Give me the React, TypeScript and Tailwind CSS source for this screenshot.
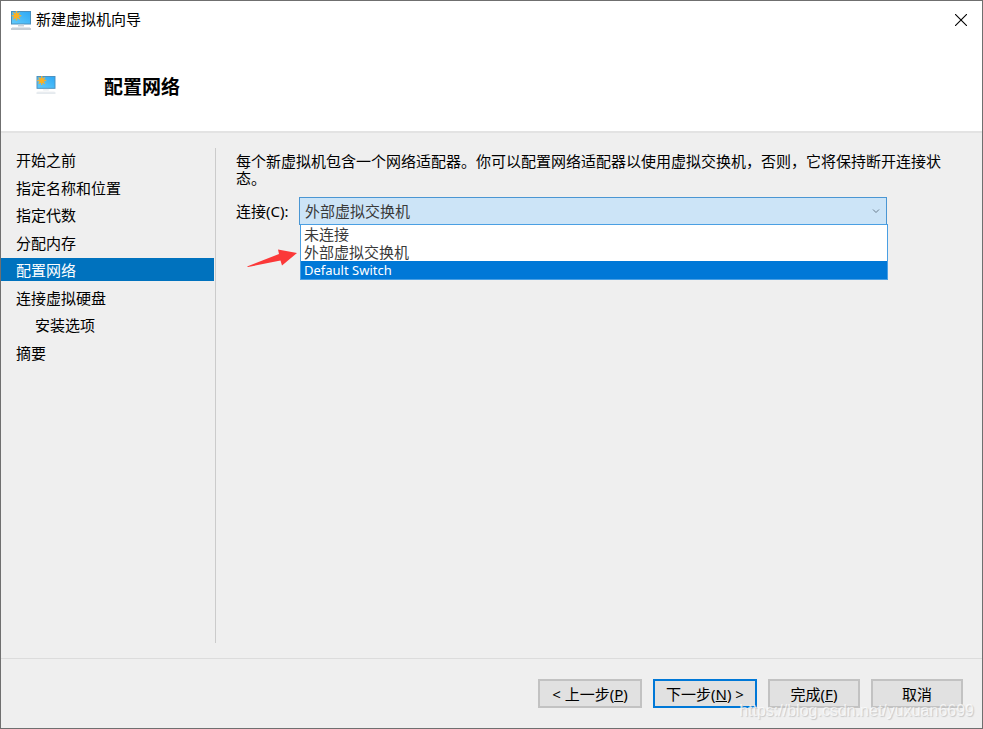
import { useState } from "react";

const steps = [
  { label: "开始之前" },
  { label: "指定名称和位置" },
  { label: "指定代数" },
  { label: "分配内存" },
  { label: "配置网络", active: true },
  { label: "连接虚拟硬盘" },
  { label: "安装选项", nested: true },
  { label: "摘要" },
];

const switches = ["未连接", "外部虚拟交换机", "Default Switch"];

function MonitorIcon({ className, faintStand }: { className?: string; faintStand?: boolean }) {
  return (
    <svg viewBox="0 0 20 19" className={className} aria-hidden="true">
      <defs>
        <linearGradient id="screen" x1="0" y1="1" x2="1" y2="0">
          <stop offset="0" stopColor="#62ccfc" />
          <stop offset="1" stopColor="#2da7f4" />
        </linearGradient>
      </defs>
      <rect x="0.5" y="0.5" width="19" height="12.500" fill="url(#screen)" stroke="#4a8fbd" />
      <g opacity={faintStand ? 0.3 : 1}>
        <path d="M7 13.500h6v2H7z" fill="#c9d3db" />
        <path d="M1 16.500h18" stroke="#dfe5ea" />
      </g>
      <path d="M0 18h20" stroke={faintStand ? "#ccd6de" : "#8c9dac"} />
      <path
        d="M5.500 0v9.600M0.700 4.800h9.600M2.200 1.500l6.600 6.600M8.800 1.500L2.200 8.100"
        stroke="#e9b040"
        strokeWidth="1.500"
      />
      <circle cx="5.500" cy="4.800" r="2.700" fill="#fbb120" />
    </svg>
  );
}

export default function App() {
  const [selected, setSelected] = useState("外部虚拟交换机");
  const [highlighted, setHighlighted] = useState("Default Switch");

  const button =
    "h-[29px] border-2 border-[#c2c2c2] bg-[#e1e1e1] text-[15px] leading-5 whitespace-nowrap";

  return (
    <div className="relative flex min-h-screen flex-col border border-[#6f6f6f] bg-[#efefef] font-['Noto_Sans','Noto_Sans_CJK_SC',sans-serif] text-[15px] text-black">
      {/* Title bar and page heading */}
      <header className="border-b-2 border-[#e3e3e3] bg-white pb-8">
        <div className="flex h-[38px] items-center pr-[14px] pl-[10px]">
          <MonitorIcon className="h-[19px] w-5" />
          <span className="ml-[5px] flex-1 pb-0.5 leading-5">新建虚拟机向导</span>
          <button type="button" aria-label="关闭" className="p-px">
            <svg viewBox="0 0 12 12" className="size-3" fill="none" stroke="#000" strokeWidth="1.100">
              <path d="M0 0l12 12M12 0L0 12" />
            </svg>
          </button>
        </div>
        <div className="mt-9 flex h-6 items-start pl-[35px]">
          <MonitorIcon className="mt-px h-[18px] w-5" faintStand />
          <h1 className="ml-12 text-[19px] leading-6 font-bold">配置网络</h1>
        </div>
      </header>

      <div className="flex flex-1 pt-[15px] pb-[15px]">
        <nav className="w-[215px] shrink-0 border-r border-[#cbcbcb] pr-px">
          <ol className="flex h-[216px] flex-col justify-between">
            {steps.map((step) => (
              <li
                key={step.label}
                aria-current={step.active ? "step" : undefined}
                className={`h-[23px] leading-6 ${step.nested ? "pl-[34px]" : "pl-[15px]"} ${
                  step.active ? "bg-[#0072be] text-white" : ""
                }`}
              >
                {step.label}
              </li>
            ))}
          </ol>
        </nav>

        <main className="min-w-0 flex-1 pt-[5px] pl-5">
          <p className="pr-7 leading-[17px]">
            每个新虚拟机包含一个网络适配器。你可以配置网络适配器以使用虚拟交换机，否则，它将保持断开连接状态。
          </p>
          <div className="mt-[10px] flex items-center pr-[95px]">
            <label htmlFor="connection" className="w-[63px] shrink-0 whitespace-nowrap">
              连接(C):
            </label>
            <div className="relative h-7 flex-1">
              <select
                id="connection"
                value={selected}
                onChange={(e) => setSelected(e.target.value)}
                className="size-full appearance-none border border-[#4a96d3] bg-[#cce4f7] pl-[5px] text-[#3a3a3a] outline-none"
              >
                {switches.map((name) => (
                  <option key={name}>{name}</option>
                ))}
              </select>
              <svg
                viewBox="0 0 8 5"
                className="pointer-events-none absolute top-3 right-[7px] h-[5px] w-2"
                fill="none"
                stroke="#6b7d8c"
              >
                <path d="M1 0.500l3 3 3-3" />
              </svg>

              {/* Open drop-down list */}
              <ul
                role="listbox"
                aria-label="连接"
                className="absolute top-[27px] -right-px left-px border border-[#4a9fe3] bg-white text-[#3a3a3a]"
              >
                {switches.map((name) => (
                  <li
                    key={name}
                    role="option"
                    aria-selected={name === highlighted}
                    onMouseEnter={() => setHighlighted(name)}
                    onClick={() => setSelected(name)}
                    className={`h-[18px] overflow-hidden pl-[3px] leading-[18px] ${
                      name === highlighted ? "bg-[#0078d7] text-[13px] text-white" : ""
                    }`}
                  >
                    {name}
                  </li>
                ))}
              </ul>

              {/* Pointer to the external switch */}
              <svg viewBox="0 0 52 20" className="absolute top-[51px] -left-[53px] h-5 w-[52px]" fill="#fb3838">
                <path d="M1 18.500L33 6 32 1.500 51 5 36 17.500 34.500 12.500 2 19z" />
              </svg>
            </div>
          </div>
        </main>
      </div>

      <footer className="flex justify-end gap-[11px] border-t border-[#dcdcdc] pt-5 pr-[19px] pb-5">
        <button type="button" className={`${button} w-[104px]`}>
          &lt; 上一步(<u>P</u>)
        </button>
        <button
          type="button"
          className="h-[29px] w-[104px] border-2 border-[#0078d7] bg-[#e1e1e1] text-[15px] leading-5 whitespace-nowrap"
        >
          下一步(<u>N</u>) &gt;
        </button>
        <button type="button" className={`${button} w-[92px]`}>
          完成(<u>F</u>)
        </button>
        <button type="button" className={`${button} w-[92px]`}>
          取消
        </button>
      </footer>

      <span className="pointer-events-none absolute right-[8px] bottom-[7px] font-['Liberation_Sans',sans-serif] text-[16px] leading-5 text-white/70 [text-shadow:1px_1px_1px_#c8c8c8]">
        https://blog.csdn.net/yuxuan6699
      </span>
    </div>
  );
}
